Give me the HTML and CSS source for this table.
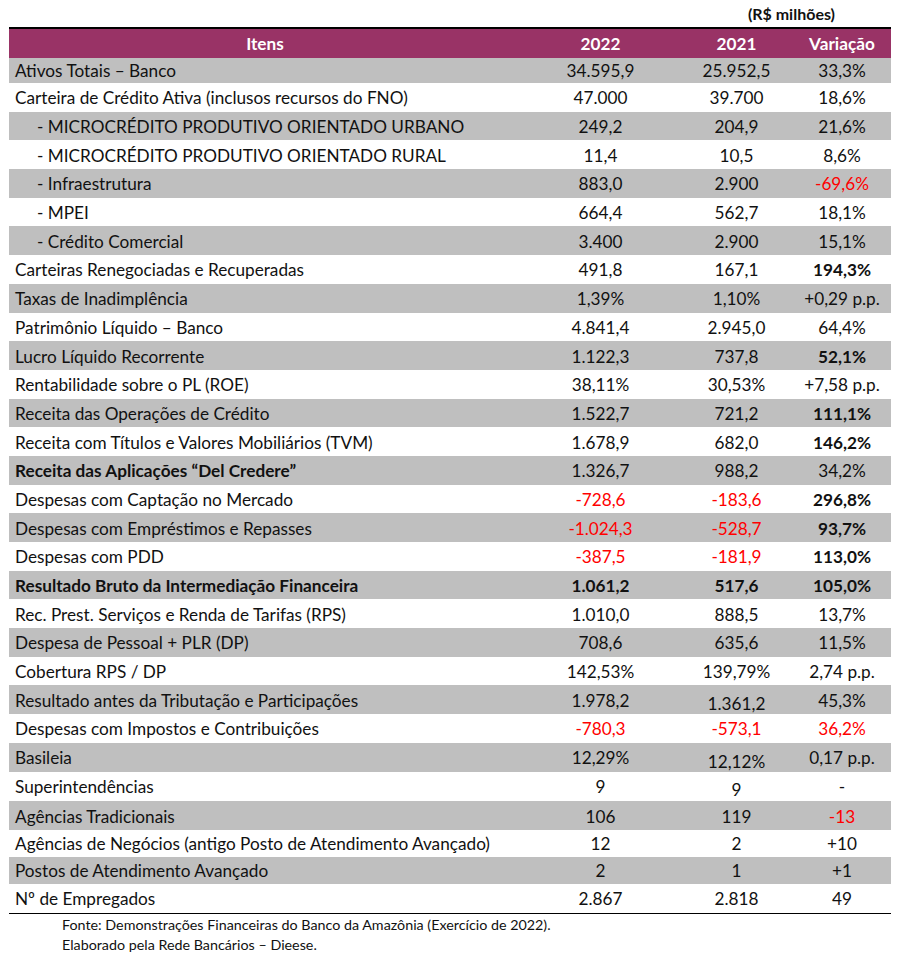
FILE: index.html
```html
<!DOCTYPE html>
<html lang="pt-BR">
<head>
<meta charset="utf-8">
<title>Banco da Amazônia – Indicadores</title>
<link rel="stylesheet" href="styles.css">
</head>
<body>
<div class="page">
  <div class="unit"><span>(R$ milhões)</span></div>
  <table class="tbl">
    <colgroup>
      <col class="c-item"><col class="c-y1"><col class="c-y2"><col class="c-var">
    </colgroup>
    <thead>
      <tr><th>Itens</th><th>2022</th><th>2021</th><th>Variação</th></tr>
    </thead>
    <tbody>
      <tr class="g first"><td>Ativos Totais – Banco</td><td>34.595,9</td><td>25.952,5</td><td>33,3%</td></tr>
      <tr><td>Carteira de Crédito Ativa (inclusos recursos do FNO)</td><td>47.000</td><td>39.700</td><td>18,6%</td></tr>
      <tr class="g"><td class="sub">- MICROCRÉDITO PRODUTIVO ORIENTADO URBANO</td><td>249,2</td><td>204,9</td><td>21,6%</td></tr>
      <tr><td class="sub">- MICROCRÉDITO PRODUTIVO ORIENTADO RURAL</td><td>11,4</td><td>10,5</td><td>8,6%</td></tr>
      <tr class="g"><td class="sub">- Infraestrutura</td><td>883,0</td><td>2.900</td><td class="neg">-69,6%</td></tr>
      <tr><td class="sub">- MPEI</td><td>664,4</td><td>562,7</td><td>18,1%</td></tr>
      <tr class="g"><td class="sub">- Crédito Comercial</td><td>3.400</td><td>2.900</td><td>15,1%</td></tr>
      <tr><td>Carteiras Renegociadas e Recuperadas</td><td>491,8</td><td>167,1</td><td class="b">194,3%</td></tr>
      <tr class="g"><td>Taxas de Inadimplência</td><td>1,39%</td><td>1,10%</td><td>+0,29 p.p.</td></tr>
      <tr><td>Patrimônio Líquido – Banco</td><td>4.841,4</td><td>2.945,0</td><td>64,4%</td></tr>
      <tr class="g"><td>Lucro Líquido Recorrente</td><td>1.122,3</td><td>737,8</td><td class="b">52,1%</td></tr>
      <tr><td>Rentabilidade sobre o PL (ROE)</td><td>38,11%</td><td>30,53%</td><td>+7,58 p.p.</td></tr>
      <tr class="g"><td>Receita das Operações de Crédito</td><td>1.522,7</td><td>721,2</td><td class="b">111,1%</td></tr>
      <tr><td>Receita com Títulos e Valores Mobiliários (TVM)</td><td>1.678,9</td><td>682,0</td><td class="b">146,2%</td></tr>
      <tr class="g"><td class="b">Receita das Aplicações “Del Credere”</td><td>1.326,7</td><td>988,2</td><td>34,2%</td></tr>
      <tr><td>Despesas com Captação no Mercado</td><td class="neg">-728,6</td><td class="neg">-183,6</td><td class="b">296,8%</td></tr>
      <tr class="g"><td>Despesas com Empréstimos e Repasses</td><td class="neg">-1.024,3</td><td class="neg">-528,7</td><td class="b">93,7%</td></tr>
      <tr><td>Despesas com PDD</td><td class="neg">-387,5</td><td class="neg">-181,9</td><td class="b">113,0%</td></tr>
      <tr class="g"><td class="b">Resultado Bruto da Intermediação Financeira</td><td class="b">1.061,2</td><td class="b">517,6</td><td class="b">105,0%</td></tr>
      <tr><td>Rec. Prest. Serviços e Renda de Tarifas (RPS)</td><td>1.010,0</td><td>888,5</td><td>13,7%</td></tr>
      <tr class="g"><td>Despesa de Pessoal + PLR (DP)</td><td>708,6</td><td>635,6</td><td>11,5%</td></tr>
      <tr><td>Cobertura RPS / DP</td><td>142,53%</td><td>139,79%</td><td>2,74 p.p.</td></tr>
      <tr class="g"><td>Resultado antes da Tributação e Participações</td><td>1.978,2</td><td class="low">1.361,2</td><td>45,3%</td></tr>
      <tr><td>Despesas com Impostos e Contribuições</td><td class="neg">-780,3</td><td class="neg">-573,1</td><td class="neg">36,2%</td></tr>
      <tr class="g"><td>Basileia</td><td>12,29%</td><td class="low">12,12%</td><td>0,17 p.p.</td></tr>
      <tr><td>Superintendências</td><td>9</td><td class="low2">9</td><td>-</td></tr>
      <tr class="g"><td>Agências Tradicionais</td><td>106</td><td>119</td><td class="neg">-13</td></tr>
      <tr class="short"><td>Agências de Negócios (antigo Posto de Atendimento Avançado)</td><td>12</td><td>2</td><td>+10</td></tr>
      <tr class="g short"><td>Postos de Atendimento Avançado</td><td>2</td><td>1</td><td>+1</td></tr>
      <tr class="last"><td>Nº de Empregados</td><td>2.867</td><td>2.818</td><td>49</td></tr>
    </tbody>
  </table>
  <div class="notes">
    <p>Fonte: Demonstrações Financeiras do Banco da Amazônia (Exercício de 2022).</p>
    <p>Elaborado pela Rede Bancários – Dieese.</p>
  </div>
</div>
</body>
</html>
```
FILE: styles.css
```css
html, body {
  margin: 0;
  padding: 0;
  background: #ffffff;
}
body {
  font-family: Lato, "Open Sans", "Liberation Sans", sans-serif;
  color: #111111;
}
.page {
  padding-left: 9px;
  width: 882px;
}
.unit {
  height: 27px;
  display: flex;
  justify-content: flex-end;
  align-items: center;
  padding-right: 56px;
  font-size: 16px;
  font-weight: 700;
  color: #111111;
}
.tbl {
  width: 882px;
  border-collapse: collapse;
  table-layout: fixed;
  font-size: 17.2px;
  line-height: 20px;
  border-top: 2px solid #000000;
  border-bottom: 1.5px solid #000000;
}
.c-item { width: 512px; }
.c-y1 { width: 159px; }
.c-y2 { width: 113px; }
.c-var { width: 98px; }
.tbl th {
  background: #993366;
  color: #ffffff;
  font-weight: 700;
  height: 29px;
  padding: 0;
  text-align: center;
  vertical-align: middle;
}
.tbl td {
  height: 26.7px;
  padding: 2px 0 0 0;
  text-align: center;
  vertical-align: middle;
  white-space: nowrap;
}
.tbl td:first-child {
  text-align: left;
  padding-left: 6px;
}
.tbl td.sub {
  padding-left: 28px;
}
.tbl tr.g td {
  background: #bfbfbf;
}
.tbl tr.first td { height: 24px; padding-top: 1px; }
.tbl tr.short td { height: 25px; }
.tbl tr.last td { height: 27px; }
.tbl td.b { font-weight: 700; }
.tbl td.neg { color: #ff0000; }
.tbl td.low { vertical-align: bottom; padding-bottom: 0; }
.tbl td.low2 { vertical-align: bottom; padding-bottom: 1px; }
.notes {
  padding-left: 53px;
  padding-top: 1px;
  font-size: 14.3px;
  color: #111111;
}
.notes p {
  margin: 0;
  line-height: 20px;
}
```
